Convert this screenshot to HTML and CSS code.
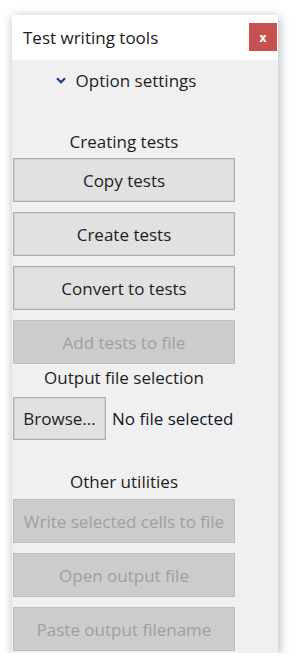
FILE: index.html
```html
<!DOCTYPE html>
<html lang="en">
<head>
    <meta charset="UTF-8">
    <meta name="viewport" content="width=device-width, initial-scale=1.0">
    <title>Test writing tools</title>
    <link rel="stylesheet" href="styles.css">
</head>
<body>

    <div class="pane">
        <div class="titlebar">
            <span class="title">Test writing tools</span>
            <button class="close">x</button>
        </div>

        <div class="content">
            <div class="options">
                <svg class="chevron" width="10" height="7" viewBox="0 0 10 7">
                    <path d="M1 1.2 L5 5.2 L9 1.2" fill="none" stroke="#1f3a8a" stroke-width="2.2"/>
                </svg>
                <span>Option settings</span>
            </div>

            <div class="label first">Creating tests</div>
            <button class="button">Copy tests</button>
            <button class="button">Create tests</button>
            <button class="button">Convert to tests</button>
            <button class="button" disabled>Add tests to file</button>

            <div class="label tight">Output file selection</div>
            <div class="file-row">
                <button class="button browse">Browse...</button>
                <span class="file-name">No file selected</span>
            </div>

            <div class="label other">Other utilities</div>
            <button class="button" disabled>Write selected cells to file</button>
            <button class="button" disabled>Open output file</button>
            <button class="button" disabled>Paste output filename</button>
        </div>
    </div>

</body>
</html>
```

FILE: styles.css
```css
body {
    font-family: "Open Sans", "Noto Sans", sans-serif;
    margin: 0;
    background-color: #fff;
    color: #1e1e1e;
}
.pane {
    width: 266px;
    margin: 15px 0 0 12px;
    background-color: #f0f0f0;
    box-shadow: 1px 2px 10px rgba(0, 0, 0, 0.3);
    padding-bottom: 2px;
}
.titlebar {
    height: 45px;
    background-color: #fff;
    display: flex;
    align-items: center;
    justify-content: space-between;
    padding: 0 1px 0 11px;
}
.title {
    font-size: 17px;
    color: #1a1a1a;
}
.close {
    width: 28px;
    height: 28px;
    border: none;
    background-color: #c75050;
    color: #fff;
    font-family: "Open Sans", sans-serif;
    font-weight: bold;
    font-size: 12px;
    padding: 0;
    margin-top: -1px;
}
.content {
    width: 222px;
    padding-left: 1px;
}
.options {
    height: 40px;
    display: flex;
    align-items: center;
    justify-content: center;
    gap: 10px;
    font-size: 17px;
    padding-left: 4px;
}
.label {
    text-align: center;
    font-size: 17px;
    line-height: 22px;
}
.label.first {
    margin-top: 31px;
    margin-bottom: 5px;
}
.label.tight {
    margin-top: 3px;
    margin-bottom: 8px;
}
.label.other {
    margin-top: 31px;
    margin-bottom: 6px;
}
.button {
    display: block;
    width: 222px;
    height: 44px;
    font-family: "Open Sans", "Noto Sans", sans-serif;
    font-size: 17px;
    color: #1e1e1e;
    background-color: #e1e1e1;
    border: 1px solid #adadad;
    box-shadow: inset 0 0 0 1px #d4d4d4;
    padding: 0;
}
.button + .button {
    margin-top: 10px;
}
.button:disabled {
    background-color: #cccccc;
    border-color: #bfbfbf;
    box-shadow: none;
    color: #a0a0a0;
}
.file-row {
    display: flex;
    align-items: center;
}
.button.browse {
    width: 93px;
    height: 43px;
}
.file-name {
    margin-left: 6px;
    font-size: 17px;
    color: #10182a;
}
```
